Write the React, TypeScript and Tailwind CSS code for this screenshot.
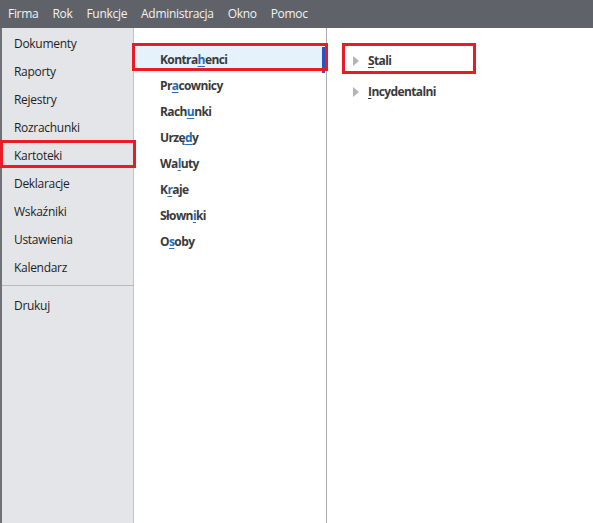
import React from "react";

type Entry = { pre: string; key: string; post: string };

const mainMenu = ["Firma", "Rok", "Funkcje", "Administracja", "Okno", "Pomoc"];

const modules = [
  "Dokumenty",
  "Raporty",
  "Rejestry",
  "Rozrachunki",
  "Kartoteki",
  "Deklaracje",
  "Wskaźniki",
  "Ustawienia",
  "Kalendarz",
];

// litera skrótu klawiszowego wyróżniona podkreśleniem
const cards: Entry[] = [
  { pre: "Kontra", key: "h", post: "enci" },
  { pre: "Pr", key: "a", post: "cownicy" },
  { pre: "Rach", key: "u", post: "nki" },
  { pre: "Urzę", key: "d", post: "y" },
  { pre: "Wa", key: "l", post: "uty" },
  { pre: "K", key: "r", post: "aje" },
  { pre: "Słown", key: "i", post: "ki" },
  { pre: "O", key: "s", post: "oby" },
];

const contractors: Entry[] = [
  { pre: "", key: "S", post: "tali" },
  { pre: "", key: "I", post: "ncydentalni" },
];

function RedFrame({ className }: { className: string }) {
  return <span className={`pointer-events-none absolute z-10 border-[3px] border-[#e81c27] ${className}`} />;
}

export default function App() {
  return (
    <div className="flex h-screen flex-col bg-white font-['Open_Sans','Noto_Sans',sans-serif] text-[12px] tracking-[-0.3px]">
      {/* pasek menu */}
      <div className="flex h-[28px] shrink-0 items-center gap-[14px] bg-[#5f6269] pl-[8px] text-[12px] tracking-[-0.3px] text-[#f2f2f2]">
        {mainMenu.map((m) => (
          <span key={m}>{m}</span>
        ))}
      </div>

      <div className="flex flex-1">
        {/* moduły */}
        <div className="w-[134px] shrink-0 border-l-2 border-r border-l-[#707176] border-r-[#c2c2c6] bg-[#e4e5e8] pt-[2px] text-[#1e1e1e]">
          {modules.map((m) => (
            <div key={m} className="relative flex h-[28px] items-center pl-[12px]">
              {m}
              {m === "Kartoteki" && <RedFrame className="-left-[2px] -right-[3px] -top-[2px] h-[28px]" />}
            </div>
          ))}
          <div className="mt-[3px] mb-[6px] h-px bg-[#b9b9bd]" />
          <div className="flex h-[28px] items-center pl-[12px]">Drukuj</div>
        </div>

        {/* kartoteki */}
        <div className="w-[193px] shrink-0 border-r border-[#acacac] pt-[19px] font-bold tracking-[-0.6px] text-[#3a3a3a]">
          {cards.map((c, i) => (
            <div
              key={c.pre + c.key}
              className={`relative flex h-[26px] items-center pl-[26px] ${i === 0 ? "bg-[#e5f1fb]" : ""}`}
            >
              <span>
                {c.pre}
                <span className="text-[#1b6fc0] underline underline-offset-2">{c.key}</span>
                {c.post}
              </span>
              {i === 0 && (
                <>
                  <span className="absolute right-[1px] top-0 h-full w-[3px] bg-[#2a55c9]" />
                  <RedFrame className="-left-[2px] -right-[2px] -top-[4px] h-[28px]" />
                </>
              )}
            </div>
          ))}
        </div>

        {/* kontrahenci */}
        <div className="flex-1 pt-[17px] font-bold tracking-[-0.6px] text-[#3a3a3a]">
          {contractors.map((c, i) => (
            <div key={c.key} className="relative flex h-[31px] items-center pl-[26px]">
              <svg width="6" height="10" viewBox="0 0 6 10" className="mr-[9px]">
                <path d="M0 0 L6 5 L0 10 Z" fill="#b4b4b4" />
              </svg>
              <span>
                <span className="underline underline-offset-2">{c.key}</span>
                {c.post}
              </span>
              {i === 0 && <RedFrame className="left-[15px] -top-[2px] h-[31px] w-[134px]" />}
            </div>
          ))}
        </div>
      </div>
    </div>
  );
}
